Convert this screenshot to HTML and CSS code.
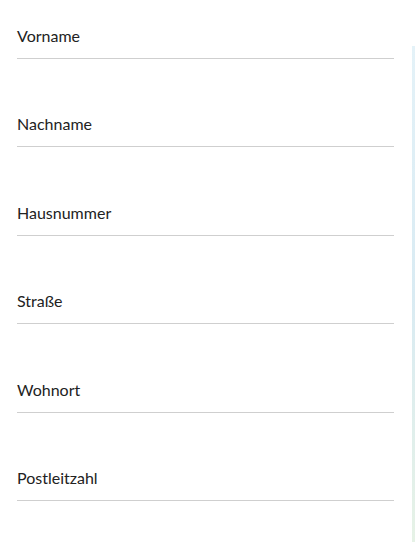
FILE: index.html
```html
<!DOCTYPE html>
<html lang="de">
<head>
  <meta charset="UTF-8">
  <title>Adresse</title>
  <link rel="stylesheet" href="styles.css">
</head>
<body>
  <div class="page">
    <form class="form">
      <div class="field"><label>Vorname</label></div>
      <div class="field"><label>Nachname</label></div>
      <div class="field"><label>Hausnummer</label></div>
      <div class="field"><label>Straße</label></div>
      <div class="field"><label>Wohnort</label></div>
      <div class="field"><label>Postleitzahl</label></div>
    </form>
    <div class="edge"></div>
  </div>
</body>
</html>
```

FILE: styles.css
```css
html, body {
  margin: 0;
  background: #fff;
}
body {
  color: #222;
  font-family: 'Lato', 'Liberation Sans', sans-serif;
  font-size: 16px;
}
.page {
  display: flex;
  height: 542px;
}
.form {
  flex: 1;
  display: flex;
  flex-direction: column;
  gap: 55.4px;
  padding: 26px 18px 0 17px;
}
.field {
  padding-bottom: 12px;
  border-bottom: 1px solid #cfcfcf;
}
.field label {
  display: block;
  line-height: 20px;
}
.edge {
  width: 3px;
  margin-top: 46px;
  background: linear-gradient(#e4f2f8, #d9ebf3 50%, #e6f2e6);
}
```
